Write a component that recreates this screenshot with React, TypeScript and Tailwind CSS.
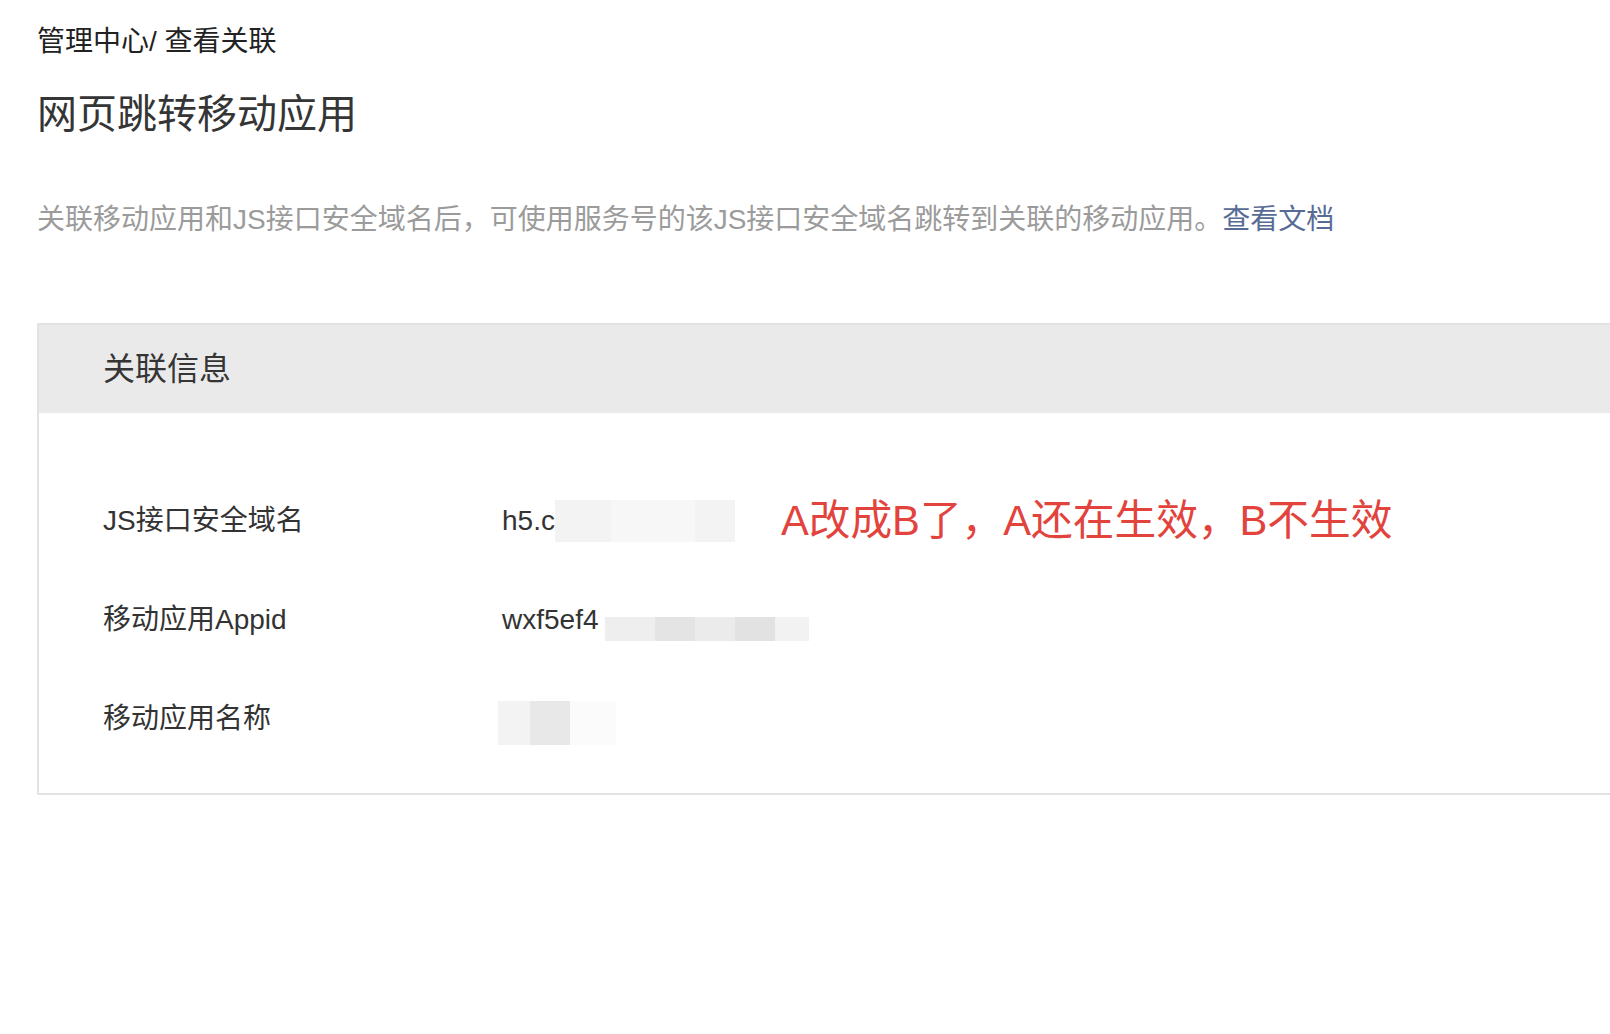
import React from "react";

// 打码用的色块
function Mosaic({ cells, h }: { cells: { w: number; c: string }[]; h: string }) {
  return (
    <div className={`flex ${h}`}>
      {cells.map((cell, i) => (
        <div key={i} style={{ width: cell.w, background: cell.c }} />
      ))}
    </div>
  );
}

const rows = [
  { label: "JS接口安全域名", key: "domain" },
  { label: "移动应用Appid", key: "appid" },
  { label: "移动应用名称", key: "name" },
];

export default function App() {
  return (
    <div className="min-h-screen w-full overflow-hidden bg-white font-['Liberation_Sans','Noto_Sans_CJK_SC',sans-serif] text-[#333333]">
      <div className="pl-[37px] pt-[24px]">
        <div className="text-[28px] leading-[36px] text-[#222222]">管理中心/ 查看关联</div>
        <h1 className="mt-[28px] text-[40px] leading-[52px] text-[#353535]">网页跳转移动应用</h1>
        <p className="mt-[60px] text-[28px] leading-[40px] text-[#9b9b9b]">
          关联移动应用和JS接口安全域名后，可使用服务号的该JS接口安全域名跳转到关联的移动应用。
          <a className="text-[#576b95]">查看文档</a>
        </p>

        <div className="mt-[83px] border-y-2 border-l-2 border-[#e3e3e3]">
          <div className="flex h-[88px] items-center bg-[#eaeaea] pl-[64px] text-[32px] text-[#353535]">
            关联信息
          </div>
          <div className="pt-[58px] pb-[25px]">
            {rows.map((r) => (
              <div key={r.key} className="flex h-[99px] items-center pl-[64px] text-[28px]">
                <div className="w-[399px] shrink-0">{r.label}</div>
                {r.key === "domain" && (
                  <div className="flex items-center">
                    <span>h5.c</span>
                    <Mosaic
                      h="h-[42px]"
                      cells={[
                        { w: 56, c: "#f3f3f3" },
                        { w: 84, c: "#f7f7f7" },
                        { w: 40, c: "#f3f3f3" },
                      ]}
                    />
                    <span className="ml-[46px] text-[41.7px] leading-[50px] text-[#e2433d]">
                      A改成B了，A还在生效，B不生效
                    </span>
                  </div>
                )}
                {r.key === "appid" && (
                  <div className="flex items-end">
                    <span>wxf5ef4</span>
                    <Mosaic
                      h="h-[24px] ml-[6px]"
                      cells={[
                        { w: 50, c: "#eeeeee" },
                        { w: 40, c: "#e4e4e4" },
                        { w: 40, c: "#ebebeb" },
                        { w: 40, c: "#e2e2e2" },
                        { w: 34, c: "#f2f2f2" },
                      ]}
                    />
                  </div>
                )}
                {r.key === "name" && (
                  <Mosaic
                    h="h-[44px] mt-[8px] ml-[-4px]"
                    cells={[
                      { w: 32, c: "#f3f3f3" },
                      { w: 40, c: "#e8e8e8" },
                      { w: 46, c: "#fbfbfb" },
                    ]}
                  />
                )}
              </div>
            ))}
          </div>
        </div>
      </div>
    </div>
  );
}
